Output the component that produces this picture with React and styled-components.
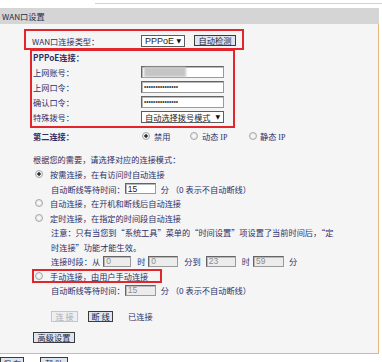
import React from "react";
import styled, { createGlobalStyle } from "styled-components";

const ink = "#2e2e66";
const red = "#e3262c";
const tan = "#e5b679";

const GlobalStyle = createGlobalStyle`
  html, body { margin: 0; padding: 0; background: #ffffff; }
  body {
    font-family: "Noto Sans CJK SC", "Noto Sans", sans-serif;
    font-size: 8.2px;
    color: ${ink};
  }
  * { box-sizing: border-box; }
`;

const Page = styled.div`
  width: 382px;
  height: 362px;
  overflow: hidden;
`;

const TopRule = styled.div`
  margin: 3px 0 0 95px;
  height: 1px;
  background: #d2d2d2;
`;

const Panel = styled.section`
  margin-top: 4px;
  width: 379px;
`;

const PanelHeader = styled.div`
  height: 16px;
  background: #d5d5d5;
  padding-left: 2px;
  line-height: 16px;
  color: #2a2a4a;
`;

const PanelBody = styled.div`
  background: #f5f5f5;
  border-right: 1px solid ${tan};
  border-bottom: 1px solid ${tan};
  padding: 5px 0 9px 0;
`;

const Highlight = styled.div`
  border: 2px solid ${red};
  margin-left: ${(p) => p.$x}px;
  margin-top: ${(p) => p.$top || 0}px;
  width: ${(p) => p.$w}px;
`;

const TypeBox = styled(Highlight)`
  height: 21px;
  display: flex;
  align-items: center;
  padding: 2px 0 0 6px;
`;

const PppoeBox = styled(Highlight)`
  padding: 0 0 2px 1px;
`;

const GroupTitle = styled.div`
  height: 13px;
  line-height: 13px;
  font-weight: bold;
`;

const FieldRow = styled.div`
  height: ${(p) => p.$h || 15}px;
  display: flex;
  align-items: center;
  padding-left: ${(p) => p.$pad || 0}px;
`;

const Label = styled.span`
  flex: none;
  width: ${(p) => p.$w}px;
  font-weight: ${(p) => (p.$bold ? "bold" : "normal")};
  white-space: nowrap;
`;

const TextInput = styled.input`
  flex: none;
  width: ${(p) => p.$w}px;
  height: ${(p) => p.$h || 12}px;
  margin: 0 0 0 ${(p) => p.$ml || 0}px;
  padding: 0 2px;
  border: 1px solid #646464;
  border-right-color: #9a9a9a;
  border-bottom-color: #9a9a9a;
  box-shadow: inset 1px 1px 0 #b9b9b9;
  background: ${(p) => (p.$off ? "#ececec" : "#ffffff")};
  color: ${(p) => (p.$off ? "#8c8c8c" : "#1d1d1d")};
  font-family: "Liberation Sans", Arial, sans-serif;
  font-size: 8.5px;
  outline: none;
`;

const SecretInput = styled(TextInput)`
  font-family: "Liberation Sans", Arial, sans-serif;
  font-size: 6.5px;
  letter-spacing: 0;
  padding-left: 2px;
  color: #3a3a3a;
`;

const AccountWrap = styled.span`
  position: relative;
  display: inline-flex;
`;

const Redacted = styled.span`
  position: absolute;
  left: 3px;
  top: 1px;
  width: 42px;
  height: 10px;
  background: #c5c5c5;
  filter: blur(1.2px);
`;

const SelectBox = styled.div`
  flex: none;
  width: ${(p) => p.$w}px;
  height: 12px;
  display: flex;
  align-items: center;
  justify-content: space-between;
  padding: 0 3px 0 3px;
  background: #ffffff;
  border: 1px solid #5c5c5c;
  color: #1d1d1d;
  font-family: ${(p) =>
    p.$latin
      ? `"Liberation Sans", Arial, sans-serif`
      : `"Noto Sans CJK SC", sans-serif`};
  font-size: ${(p) => (p.$latin ? "9px" : "8.2px")};
  white-space: nowrap;
`;

const Arrow = styled.span`
  font-size: 6px;
  color: #111;
  font-family: "DejaVu Sans", sans-serif;
`;

const Btn = styled.button`
  flex: none;
  width: ${(p) => p.$w}px;
  height: ${(p) => p.$h || 11}px;
  margin: 0 0 0 ${(p) => p.$ml || 0}px;
  padding: 0;
  display: inline-flex;
  align-items: center;
  justify-content: center;
  font-family: "Noto Sans CJK SC", sans-serif;
  font-size: 8.2px;
  line-height: 1;
  white-space: pre;
  color: ${(p) => (p.disabled ? "#a9adb3" : "#1e1e44")};
  background: ${(p) => (p.disabled ? "#edf0f3" : "#dde5ee")};
  border: 1px solid ${(p) => (p.disabled ? "#c3c7cc" : "#3b3b3b")};
  border-radius: 0;
`;

const RadioGroup = styled.div`
  display: flex;
  align-items: center;
`;

const Option = styled.span`
  flex: none;
  width: ${(p) => (p.$w ? `${p.$w}px` : "auto")};
  display: inline-flex;
  align-items: center;
  gap: ${(p) => p.$gap || 4}px;
`;

const Radio = styled.span`
  flex: none;
  width: 8px;
  height: 8px;
  border-radius: 50%;
  border: 1px solid #a8a8a8;
  background: ${(p) =>
    p.$on
      ? "radial-gradient(circle, #2f2f2f 0 1.4px, #f6f6f6 2px, #d8d8d8 100%)"
      : "radial-gradient(circle, #ffffff 0, #d9d9d9 100%)"};
`;

const Latin = styled.span`
  font-family: "Liberation Serif", serif;
  font-size: 8px;
`;

const IntroLine = styled.div`
  margin: 9px 0 0 33px;
  height: 15px;
  line-height: 15px;
`;

const ModeList = styled.div`
  display: flex;
  flex-direction: column;
`;

const ChoiceRow = styled.div`
  height: 14.5px;
  display: flex;
  align-items: center;
  gap: 7px;
  padding-left: 35px;
`;

const ManualBox = styled.div`
  height: 14.5px;
  width: 130px;
  margin-left: 32px;
  border: 2px solid ${red};
  display: flex;
  align-items: center;
  gap: 7px;
  padding-left: 1px;
`;

const SubRow = styled.div`
  height: 14.5px;
  display: flex;
  align-items: center;
  padding-left: 51px;
  white-space: nowrap;
`;

const Notice = styled.p`
  margin: 0;
  padding-left: 51px;
  line-height: 14.5px;
  white-space: nowrap;
`;

const Word = styled.span`
  flex: none;
  margin-left: ${(p) => p.$ml || 0}px;
`;

const ActionRow = styled.div`
  margin-top: 11.5px;
  height: 14px;
  display: flex;
  align-items: center;
  padding-left: 51px;
`;

const AdvancedRow = styled.div`
  margin-top: 7px;
  height: 14px;
  display: flex;
  align-items: center;
  padding-left: 33px;
`;

const Footer = styled.div`
  display: flex;
  align-items: flex-start;
  padding-top: 3px;
  gap: 16px;
`;

export default function App() {
  return (
    <Page>
      <GlobalStyle />
      <TopRule />
      <Panel>
        <PanelHeader>WAN口设置</PanelHeader>
        <PanelBody>
          <TypeBox $x={24} $w={220}>
            <Label $w={109}>WAN口连接类型：</Label>
            <SelectBox $w={44} $latin>
              PPPoE <Arrow>▼</Arrow>
            </SelectBox>
            <Btn $w={42} $ml={9}>
              自动检测
            </Btn>
          </TypeBox>

          <PppoeBox $x={30} $w={205} $top={-1}>
            <GroupTitle>PPPoE连接：</GroupTitle>
            <FieldRow>
              <Label $w={108}>上网账号：</Label>
              <AccountWrap>
                <TextInput $w={83} defaultValue="" readOnly />
                <Redacted />
              </AccountWrap>
            </FieldRow>
            <FieldRow>
              <Label $w={108}>上网口令：</Label>
              <SecretInput type="password" $w={83} defaultValue="aaaaaaaaaaaaaaa" readOnly />
            </FieldRow>
            <FieldRow>
              <Label $w={108}>确认口令：</Label>
              <SecretInput type="password" $w={83} defaultValue="aaaaaaaaaaaaaaa" readOnly />
            </FieldRow>
            <FieldRow>
              <Label $w={108}>特殊拨号：</Label>
              <SelectBox $w={83}>
                自动选择拨号模式 <Arrow>▼</Arrow>
              </SelectBox>
            </FieldRow>
          </PppoeBox>

          <FieldRow $pad={33}>
            <Label $w={109} $bold>
              第二连接：
            </Label>
            <RadioGroup>
              <Option $w={48}>
                <Radio $on />
                禁用
              </Option>
              <Option $w={59}>
                <Radio />
                <span>
                  动态 <Latin>IP</Latin>
                </span>
              </Option>
              <Option $gap={3}>
                <Radio />
                <span>
                  静态 <Latin>IP</Latin>
                </span>
              </Option>
            </RadioGroup>
          </FieldRow>

          <IntroLine>根据您的需要，请选择对应的连接模式：</IntroLine>

          <ModeList>
            <ChoiceRow>
              <Radio $on />
              按需连接，在有访问时自动连接
            </ChoiceRow>
            <SubRow>
              自动断线等待时间：
              <TextInput $w={31} $h={11} defaultValue="15" readOnly />
              <Word $ml={5}>分</Word>
              <Word $ml={2}>（0 表示不自动断线）</Word>
            </SubRow>
            <ChoiceRow>
              <Radio />
              自动连接，在开机和断线后自动连接
            </ChoiceRow>
            <ChoiceRow>
              <Radio />
              定时连接，在指定的时间段自动连接
            </ChoiceRow>
            <Notice>
              注意：只有当您到“系统工具”菜单的“时间设置”项设置了当前时间后，“定
              <br />
              时连接”功能才能生效。
            </Notice>
            <SubRow>
              连接时段：从
              <TextInput $w={28} $h={11} $ml={3} $off defaultValue="0" readOnly />
              <Word $ml={6}>时</Word>
              <TextInput $w={30} $h={11} $ml={3} $off defaultValue="0" readOnly />
              <Word $ml={6}>分到</Word>
              <TextInput $w={30} $h={11} $ml={5} $off defaultValue="23" readOnly />
              <Word $ml={6}>时</Word>
              <TextInput $w={31} $h={11} $ml={3} $off defaultValue="59" readOnly />
              <Word $ml={5}>分</Word>
            </SubRow>
            <ManualBox>
              <Radio />
              手动连接，由用户手动连接
            </ManualBox>
            <SubRow>
              自动断线等待时间：
              <TextInput $w={31} $h={11} $off defaultValue="15" readOnly />
              <Word $ml={5}>分</Word>
              <Word $ml={2}>（0 表示不自动断线）</Word>
            </SubRow>
          </ModeList>

          <ActionRow>
            <Btn $w={27} disabled>
              {"连 接"}
            </Btn>
            <Btn $w={25} $ml={10}>
              {"断 线"}
            </Btn>
            <Word $ml={15}>已连接</Word>
          </ActionRow>

          <AdvancedRow>
            <Btn $w={42}>高级设置</Btn>
          </AdvancedRow>
        </PanelBody>
      </Panel>
      <Footer>
        <Btn $w={24} $h={12}>
          {"保 存"}
        </Btn>
        <Btn $w={28} $h={12}>
          {"帮 助"}
        </Btn>
      </Footer>
    </Page>
  );
}
